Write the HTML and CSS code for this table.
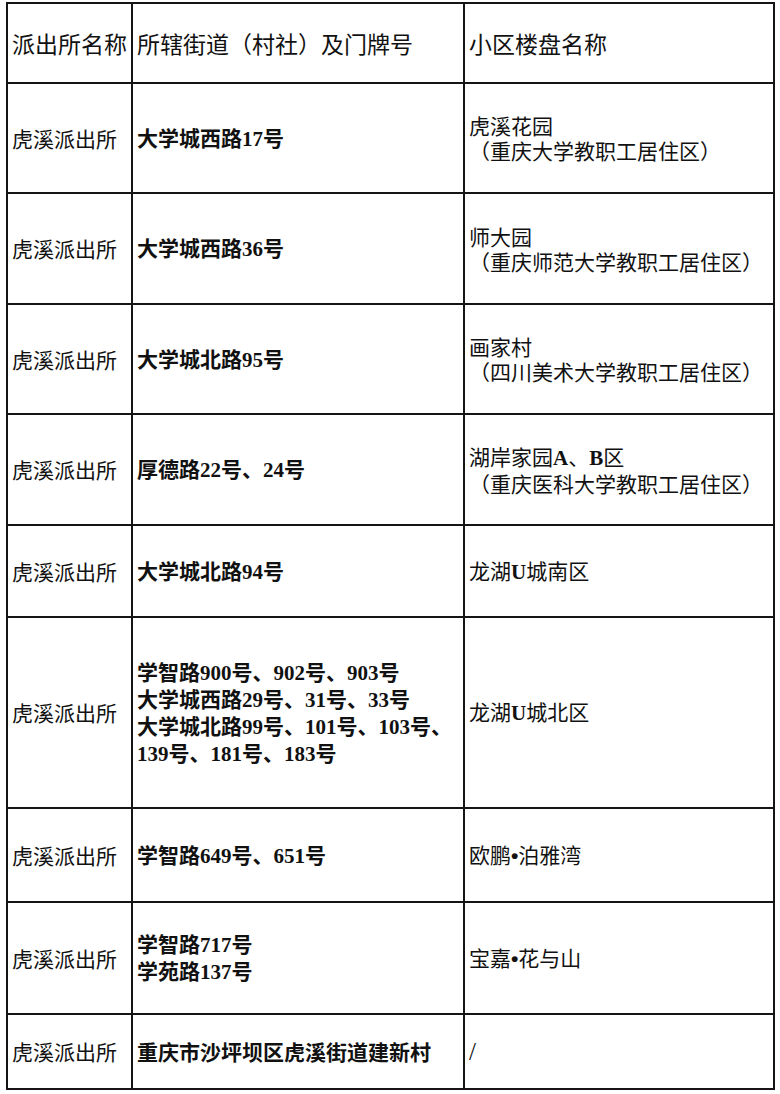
FILE: index.html
```html
<!DOCTYPE html>
<html lang="zh-CN">
<head>
<meta charset="utf-8">
<title>派出所辖区表</title>
<link rel="stylesheet" href="styles.css">
</head>
<body>
<table class="grid">
  <colgroup>
    <col class="c1">
    <col class="c2">
    <col class="c3">
  </colgroup>
  <tr class="h80 head">
    <td>派出所名称</td>
    <td>所辖街道（村社）及门牌号</td>
    <td>小区楼盘名称</td>
  </tr>
  <tr class="h110">
    <td class="st">虎溪派出所</td>
    <td class="addr">大学城西路<span class="lat">17</span>号</td>
    <td class="cm">虎溪花园<br>（重庆大学教职工居住区）</td>
  </tr>
  <tr class="h111">
    <td class="st">虎溪派出所</td>
    <td class="addr">大学城西路<span class="lat">36</span>号</td>
    <td class="cm">师大园<br>（重庆师范大学教职工居住区）</td>
  </tr>
  <tr class="h110">
    <td class="st">虎溪派出所</td>
    <td class="addr">大学城北路<span class="lat">95</span>号</td>
    <td class="cm">画家村<br>（四川美术大学教职工居住区）</td>
  </tr>
  <tr class="h111">
    <td class="st">虎溪派出所</td>
    <td class="addr">厚德路<span class="lat">22</span>号、<span class="lat">24</span>号</td>
    <td class="cm">湖岸家园<span class="lat">A</span>、<span class="lat">B</span>区<br>（重庆医科大学教职工居住区）</td>
  </tr>
  <tr class="h92">
    <td class="st">虎溪派出所</td>
    <td class="addr">大学城北路<span class="lat">94</span>号</td>
    <td class="cm">龙湖<span class="lat">U</span>城南区</td>
  </tr>
  <tr class="h191">
    <td class="st">虎溪派出所</td>
    <td class="addr">学智路<span class="lat">900</span>号、<span class="lat">902</span>号、<span class="lat">903</span>号<br>大学城西路<span class="lat">29</span>号、<span class="lat">31</span>号、<span class="lat">33</span>号<br>大学城北路<span class="lat">99</span>号、<span class="lat">101</span>号、<span class="lat">103</span>号、<br><span class="lat">139</span>号、<span class="lat">181</span>号、<span class="lat">183</span>号</td>
    <td class="cm">龙湖<span class="lat">U</span>城北区</td>
  </tr>
  <tr class="h94">
    <td class="st">虎溪派出所</td>
    <td class="addr">学智路<span class="lat">649</span>号、<span class="lat">651</span>号</td>
    <td class="cm">欧鹏<span class="dot">•</span>泊雅湾</td>
  </tr>
  <tr class="h112">
    <td class="st">虎溪派出所</td>
    <td class="addr">学智路<span class="lat">717</span>号<br>学苑路<span class="lat">137</span>号</td>
    <td class="cm">宝嘉<span class="dot">•</span>花与山</td>
  </tr>
  <tr class="h75">
    <td class="st">虎溪派出所</td>
    <td class="addr">重庆市沙坪坝区虎溪街道建新村</td>
    <td class="cm"><span class="slash">/</span></td>
  </tr>
</table>
</body>
</html>
```

FILE: styles.css
```css
html, body {
  margin: 0;
  padding: 0;
  background: #ffffff;
}

body {
  font-family: "Noto Sans CJK SC", "Noto Sans", sans-serif;
  color: #111;
}

.grid {
  border-collapse: collapse;
  table-layout: fixed;
  width: 767px;
  margin: 2px 0 0 6px;
}

.c1 { width: 125px; }
.c2 { width: 332px; }
.c3 { width: 310px; }

.grid td {
  border: 2px solid #151515;
  padding: 0 3px 0 4px;
  vertical-align: middle;
  line-height: 25px;
  font-size: 21px;
  white-space: nowrap;
  overflow: hidden;
}

.h75 { height: 75px; }
.h80 { height: 80px; }
.h92 { height: 92px; }
.h94 { height: 94px; }
.h110 { height: 110px; }
.h111 { height: 111px; }
.h112 { height: 112px; }
.h191 { height: 191px; }

.head td {
  font-size: 23px;
  font-weight: 400;
}

.st {
  font-size: 21px;
}

.addr {
  font-size: 21.5px;
  font-weight: 700;
}

.cm {
  font-size: 21px;
}

.lat {
  font-family: "Liberation Serif", serif;
  font-weight: 700;
}

.dot {
  font-family: "Liberation Sans", sans-serif;
  font-weight: 700;
}

.slash {
  font-family: "Liberation Serif", serif;
  font-weight: 400;
  font-size: 25px;
}
```
